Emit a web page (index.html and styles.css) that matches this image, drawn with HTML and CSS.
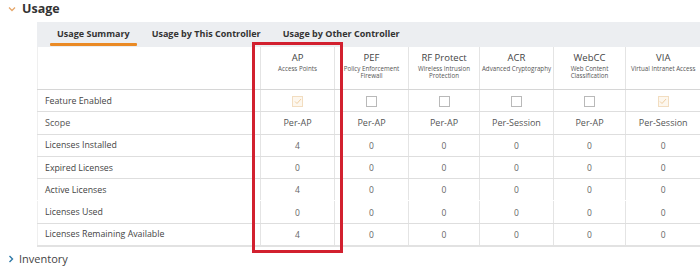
FILE: index.html
```html
<!DOCTYPE html>
<html>
<head>
<meta charset="utf-8">
<link rel="stylesheet" href="styles.css">
</head>
<body>
<div class="page">
  <div class="section-head">
    <svg class="chev-down" width="8" height="6" viewBox="0 0 8 6"><path d="M1 1.5 L4 4.5 L7 1.5" fill="none" stroke="#e6a76a" stroke-width="1.3"/></svg>
    <span class="section-title">Usage</span>
  </div>
  <div class="panel">
    <div class="tabs">
      <div class="tab active">Usage Summary</div>
      <div class="tab">Usage by This Controller</div>
      <div class="tab">Usage by Other Controller</div>
    </div>
    <table class="grid">
      <colgroup>
        <col class="c-label"><col class="c-ap"><col class="c-pef"><col class="c-rf"><col class="c-acr"><col class="c-web"><col class="c-via">
      </colgroup>
      <thead>
        <tr class="hrow">
          <th class="blank"></th>
          <th><div class="h1">AP</div><div class="h2">Access Points</div></th>
          <th><div class="h1">PEF</div><div class="h2">Policy Enforcement Firewall</div></th>
          <th><div class="h1">RF Protect</div><div class="h2">Wireless Intrusion Protection</div></th>
          <th><div class="h1">ACR</div><div class="h2">Advanced Cryptography</div></th>
          <th><div class="h1">WebCC</div><div class="h2">Web Content Classification</div></th>
          <th><div class="h1">VIA</div><div class="h2 nowrap">Virtual Intranet Access</div></th>
        </tr>
      </thead>
      <tbody>
        <tr>
          <td class="lbl">Feature Enabled</td>
          <td><span class="cb on"><svg width="8" height="7" viewBox="0 0 8 7"><path d="M1 3.5 L3 5.5 L7 1" fill="none" stroke="#efcfa3" stroke-width="1"/></svg></span></td>
          <td><span class="cb"></span></td>
          <td><span class="cb"></span></td>
          <td><span class="cb"></span></td>
          <td><span class="cb"></span></td>
          <td><span class="cb on"><svg width="8" height="7" viewBox="0 0 8 7"><path d="M1 3.5 L3 5.5 L7 1" fill="none" stroke="#efcfa3" stroke-width="1"/></svg></span></td>
        </tr>
        <tr class="scope">
          <td class="lbl">Scope</td>
          <td>Per-AP</td><td>Per-AP</td><td>Per-AP</td><td>Per-Session</td><td>Per-AP</td><td>Per-Session</td>
        </tr>
        <tr>
          <td class="lbl">Licenses Installed</td>
          <td>4</td><td>0</td><td>0</td><td>0</td><td>0</td><td>0</td>
        </tr>
        <tr>
          <td class="lbl">Expired Licenses</td>
          <td>0</td><td>0</td><td>0</td><td>0</td><td>0</td><td>0</td>
        </tr>
        <tr class="noline">
          <td class="lbl">Active Licenses</td>
          <td>4</td><td>0</td><td>0</td><td>0</td><td>0</td><td>0</td>
        </tr>
        <tr>
          <td class="lbl">Licenses Used</td>
          <td>0</td><td>0</td><td>0</td><td>0</td><td>0</td><td>0</td>
        </tr>
        <tr class="last">
          <td class="lbl">Licenses Remaining Available</td>
          <td>4</td><td>0</td><td>0</td><td>0</td><td>0</td><td>0</td>
        </tr>
      </tbody>
    </table>
  </div>
  <div class="section-head inv">
    <svg class="chev-right" width="6" height="8" viewBox="0 0 6 8"><path d="M1.5 1 L4.5 4 L1.5 7" fill="none" stroke="#2d79a8" stroke-width="1.4"/></svg>
    <span class="section-title2">Inventory</span>
  </div>
  <div class="highlight"></div>
</div>
</body>
</html>
```

FILE: styles.css
```css
html, body {
  margin: 0;
  padding: 0;
  background: #fff;
}
.page {
  position: relative;
  width: 700px;
  height: 268px;
  overflow: hidden;
  font-family: "Open Sans", "Noto Sans", sans-serif;
  color: #444;
}
.section-head {
  display: flex;
  align-items: center;
  height: 16px;
  padding-left: 8px;
}
.chev-down { margin-right: 6px; margin-top: 1px; }
.section-title {
  font-size: 12.5px;
  font-weight: 700;
  color: #333;
}
.panel {
  margin-left: 37px;
  margin-top: 6px;
}
.tabs {
  display: flex;
  height: 25px;
  background: #eceef1;
  padding-left: 13px;
  gap: 8px;
}
.tab {
  position: relative;
  padding: 0 7px;
  font-size: 9px;
  font-weight: 700;
  color: #333;
  line-height: 24px;
  white-space: nowrap;
}
.tab.active::after {
  content: "";
  position: absolute;
  left: 0;
  right: 0;
  bottom: 1px;
  height: 3px;
  background: #ea8a25;
  border-radius: 1px;
}
.grid {
  table-layout: fixed;
  border-collapse: collapse;
  width: 663px;
  border-left: 1px solid #efefef;
}
.c-label { width: 223px; }
.c-ap { width: 74px; }
.c-pef { width: 74px; }
.c-rf { width: 71px; }
.c-acr { width: 74px; }
.c-web { width: 72px; }
.c-via { width: 75px; }
.hrow th {
  height: 38px;
  vertical-align: top;
  padding: 4px 1px 0;
  font-weight: 400;
  text-align: center;
  border-left: 1px solid #e4e4e4;
  border-bottom: 1px solid #d6d6d6;
}
.hrow th.blank { border-left: none; }
.h1 {
  font-size: 9.5px;
  color: #444;
  line-height: 13px;
}
.h2 {
  font-size: 6.2px;
  color: #555;
  line-height: 6.5px;
  margin-top: 2px;
}
.nowrap { white-space: nowrap; }
tbody tr { height: 22.3px; }
tbody td {
  padding: 0;
  text-align: center;
  font-size: 8.5px;
  color: #666;
  border-left: 1px solid #e4e4e4;
  border-bottom: 1px solid #dedede;
}
tbody td.lbl {
  text-align: left;
  padding-left: 7px;
  font-size: 8.8px;
  color: #444;
  border-left: none;
  white-space: nowrap;
}
tr.scope td { font-size: 9px; color: #555; }
tr.noline td { border-bottom-color: transparent; }
tr.last td { border-bottom: 2px solid #e2e2e2; }
.cb {
  display: inline-flex;
  align-items: center;
  justify-content: center;
  width: 9px;
  height: 9px;
  border: 1px solid #b9b9b9;
  background: #fff;
  vertical-align: middle;
}
.cb.on {
  border-color: #f2ddc0;
  background: #fdf7ee;
}
.inv {
  margin-top: 5px;
  height: 14px;
}
.chev-right { margin-right: 5px; }
.section-title2 {
  font-size: 11px;
  color: #444;
}
.highlight {
  position: absolute;
  left: 252px;
  top: 42px;
  width: 85px;
  height: 205px;
  border: 3px solid #d2202f;
}
```
